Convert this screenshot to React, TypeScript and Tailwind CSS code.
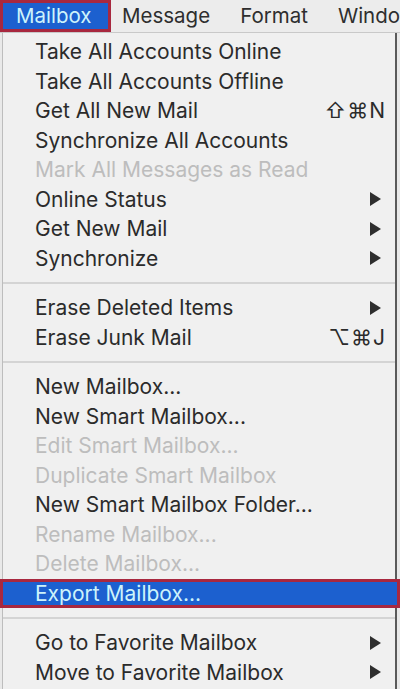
import React from "react";

type Item =
  | { kind: "sep" }
  | { kind: "item"; label: string; disabled?: boolean; sub?: boolean; keys?: string; active?: boolean };

const items: Item[] = [
  { kind: "item", label: "Take All Accounts Online" },
  { kind: "item", label: "Take All Accounts Offline" },
  { kind: "item", label: "Get All New Mail", keys: "⇧⌘N" },
  { kind: "item", label: "Synchronize All Accounts" },
  { kind: "item", label: "Mark All Messages as Read", disabled: true },
  { kind: "item", label: "Online Status", sub: true },
  { kind: "item", label: "Get New Mail", sub: true },
  { kind: "item", label: "Synchronize", sub: true },
  { kind: "sep" },
  { kind: "item", label: "Erase Deleted Items", sub: true },
  { kind: "item", label: "Erase Junk Mail", keys: "⌥⌘J" },
  { kind: "sep" },
  { kind: "item", label: "New Mailbox..." },
  { kind: "item", label: "New Smart Mailbox..." },
  { kind: "item", label: "Edit Smart Mailbox...", disabled: true },
  { kind: "item", label: "Duplicate Smart Mailbox", disabled: true },
  { kind: "item", label: "New Smart Mailbox Folder..." },
  { kind: "item", label: "Rename Mailbox...", disabled: true },
  { kind: "item", label: "Delete Mailbox...", disabled: true },
  { kind: "item", label: "Export Mailbox...", active: true },
  { kind: "sep" },
  { kind: "item", label: "Go to Favorite Mailbox", sub: true },
  { kind: "item", label: "Move to Favorite Mailbox", sub: true },
];

function Arrow() {
  return (
    <svg width="11" height="14" viewBox="0 0 11 14" className="mr-[14px] fill-[#2e2e2e]">
      <path d="M0 0 L11 7 L0 14 Z" />
    </svg>
  );
}

function MenuRow({ item }: { item: Item }) {
  if (item.kind === "sep") {
    return (
      <div className="flex h-[20px] items-center">
        <div className="h-[2px] w-full bg-[#d4d4d4]" />
      </div>
    );
  }
  if (item.active) {
    return (
      <div className="-ml-[3px] -mr-[5px] flex h-[29.5px] items-center border-[3px] border-[#a8283f] bg-[#1c60cf] pl-[32px] text-[#cdf3fb]">
        {item.label}
      </div>
    );
  }
  return (
    <div
      className={`flex h-[29.5px] items-center justify-between pl-[32px] ${
        item.disabled ? "text-[#bdbdbd]" : "text-[#2b2b2b]"
      }`}
    >
      <span>{item.label}</span>
      {item.sub && <Arrow />}
      {item.keys && <span className="mr-[9px] tracking-[1px]">{item.keys}</span>}
    </div>
  );
}

export default function App() {
  return (
    <div
      className="flex h-[689px] w-[400px] flex-col overflow-hidden bg-[#e9e9e9] text-[21px]"
      style={{ fontFamily: "Inter, 'DejaVu Sans', sans-serif" }}
    >
      <div className="flex h-[33px] shrink-0 items-stretch border-b border-[#c9c9c9] bg-[#ececec] text-[20.5px] text-[#2e2e2e]">
        <div className="flex w-[111px] shrink-0 items-center border-[3px] border-[#a8283f] bg-[#1c60cf] pl-[13px] text-[#cdf3fb]">
          Mailbox
        </div>
        <div className="flex shrink-0 items-center pl-[11px] pr-[30px]">Message</div>
        <div className="flex shrink-0 items-center pr-[30px]">Format</div>
        <div className="flex shrink-0 items-center whitespace-nowrap">Window</div>
      </div>
      <div className="ml-[2px] mr-[3px] flex flex-1 flex-col border-l border-r-2 border-[#bdbdbd] border-r-[#5a5a5a] bg-[#f0f0f0] pt-[4px]">
        {items.map((it, i) => (
          <MenuRow key={i} item={it} />
        ))}
      </div>
    </div>
  );
}
